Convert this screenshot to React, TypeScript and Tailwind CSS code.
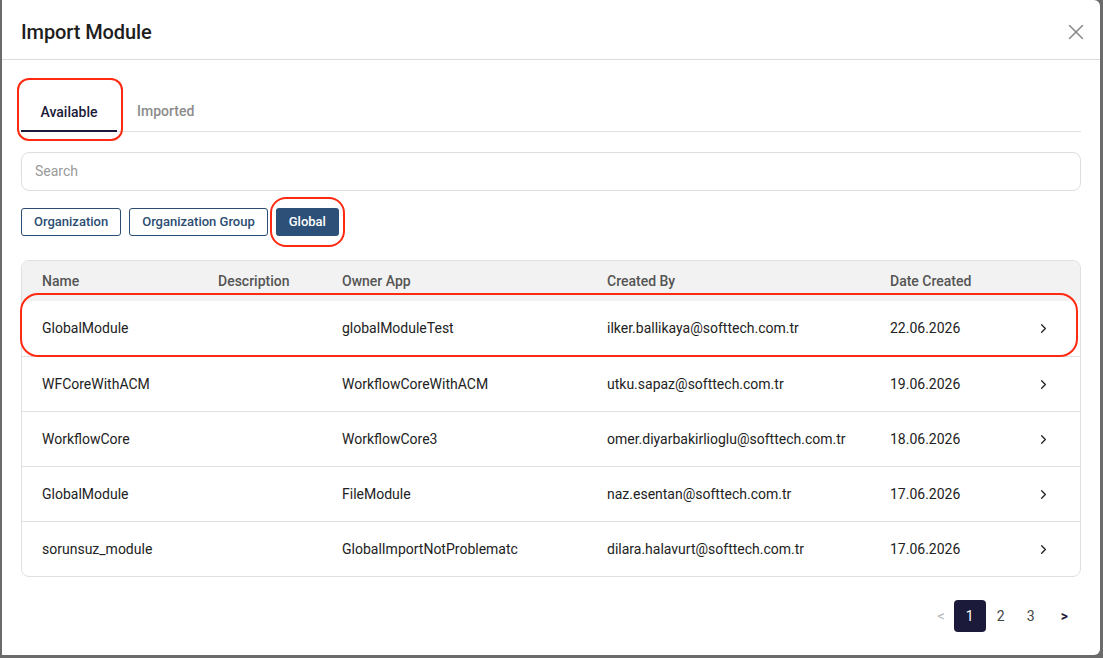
import { X, ChevronRight } from "lucide-react";

const rows = [
  { name: "GlobalModule", desc: "", owner: "globalModuleTest", by: "ilker.ballikaya@softtech.com.tr", date: "22.06.2026" },
  { name: "WFCoreWithACM", desc: "", owner: "WorkflowCoreWithACM", by: "utku.sapaz@softtech.com.tr", date: "19.06.2026" },
  { name: "WorkflowCore", desc: "", owner: "WorkflowCore3", by: "omer.diyarbakirlioglu@softtech.com.tr", date: "18.06.2026" },
  { name: "GlobalModule", desc: "", owner: "FileModule", by: "naz.esentan@softtech.com.tr", date: "17.06.2026" },
  { name: "sorunsuz_module", desc: "", owner: "GlobalImportNotProblematc", by: "dilara.halavurt@softtech.com.tr", date: "17.06.2026" },
];

const cols = "grid grid-cols-[176px_124px_265px_283px_115px_1fr] pl-[20px] items-center";

function App() {
  return (
    <div className="w-[1103px] h-[658px] bg-[#6b6b6b] overflow-hidden" style={{ fontFamily: "Roboto, 'Liberation Sans', sans-serif" }}>
      <div className="relative ml-[2px] mr-[3px] h-[655px] bg-white rounded-br-[6px] rounded-tr-[6px]">
        {/* Header */}
        <div className="flex items-center justify-between h-[60px] pt-[4px] pl-[19px] pr-[11px] border-b border-[#dcdcdc]">
          <h1 className="text-[20px] font-medium text-[#1e1e1e] tracking-[-0.1px]">Import Module</h1>
          <X className="w-[26px] h-[26px] text-[#8a8a8a]" strokeWidth={1.4} />
        </div>

        <div className="px-[19px]">
          {/* Tabs */}
          <div className="flex items-end h-[72px] border-b border-[#e0e0e0]">
            <div className="w-[96px] h-[40px] pt-[2px] flex items-center justify-center text-[14px] font-medium text-[#1b1a3a] border-b-2 border-[#1b1a3a] -mb-px">
              Available
            </div>
            <div className="ml-[20px] h-[40px] flex items-center text-[14px] font-medium text-[#8c8c8c]">Imported</div>
          </div>

          {/* Search */}
          <div className="mt-[20px] h-[39px] rounded-[8px] border border-[#dedede] flex items-center px-[13px] text-[14px] text-[#9a9a9a]">
            Search
          </div>

          {/* Filters */}
          <div className="flex gap-[8px] mt-[17px]">
            <button className="h-[28px] px-[12px] rounded-[3px] border border-[#2c4d72] text-[13px] font-medium text-[#2c4d72]">Organization</button>
            <button className="h-[28px] px-[12px] rounded-[3px] border border-[#2c4d72] text-[13px] font-medium text-[#2c4d72]">Organization Group</button>
            <button className="h-[28px] px-[13px] rounded-[3px] bg-[#2c5077] text-[13px] font-medium text-white">Global</button>
          </div>

          {/* Table */}
          <div className="mt-[24px] rounded-[8px] border border-[#e0e0e0] overflow-hidden">
            <div className={`${cols} h-[40px] pt-[1px] bg-[#f2f2f2] text-[14px] font-medium text-[#555555]`}>
              <div>Name</div>
              <div>Description</div>
              <div>Owner App</div>
              <div>Created By</div>
              <div>Date Created</div>
              <div />
            </div>
            {rows.map((r, i) => (
              <div key={i} className={`${cols} h-[55px] text-[14px] text-[#222222] ${i > 0 ? "border-t border-[#e0e0e0]" : ""}`}>
                <div>{r.name}</div>
                <div>{r.desc}</div>
                <div>{r.owner}</div>
                <div>{r.by}</div>
                <div>{r.date}</div>
                <div className="flex justify-center pl-[2px]">
                  <ChevronRight className="w-[15px] h-[15px] text-[#222222]" strokeWidth={2} />
                </div>
              </div>
            ))}
          </div>

          {/* Pagination */}
          <div className="flex justify-end items-center mt-[23px] pr-[13px] text-[14px]">
            <span className="text-[#b5b5b5] text-[15px] mr-[9px]">&lt;</span>
            <span className="w-[32px] h-[32px] rounded-[4px] bg-[#1b1a3a] text-white flex items-center justify-center">1</span>
            <span className="w-[30px] text-center text-[#444444]">2</span>
            <span className="w-[30px] text-center text-[#444444]">3</span>
            <span className="ml-[15px] font-bold text-[#1b1a3a]">&gt;</span>
          </div>
        </div>

        {/* red annotation marks */}
        <div className="absolute left-[15px] top-[78px] w-[106px] h-[63px] rounded-[12px] border-2 border-[#ff2a12] pointer-events-none" />
        <div className="absolute left-[268px] top-[197px] w-[75px] h-[50px] rounded-[16px] border-2 border-[#ff2a12] pointer-events-none" />
        <div className="absolute left-[18px] top-[293px] w-[1058px] h-[64px] rounded-[18px] border-2 border-[#ff2a12] pointer-events-none" />
      </div>
    </div>
  );
}

export default App;
